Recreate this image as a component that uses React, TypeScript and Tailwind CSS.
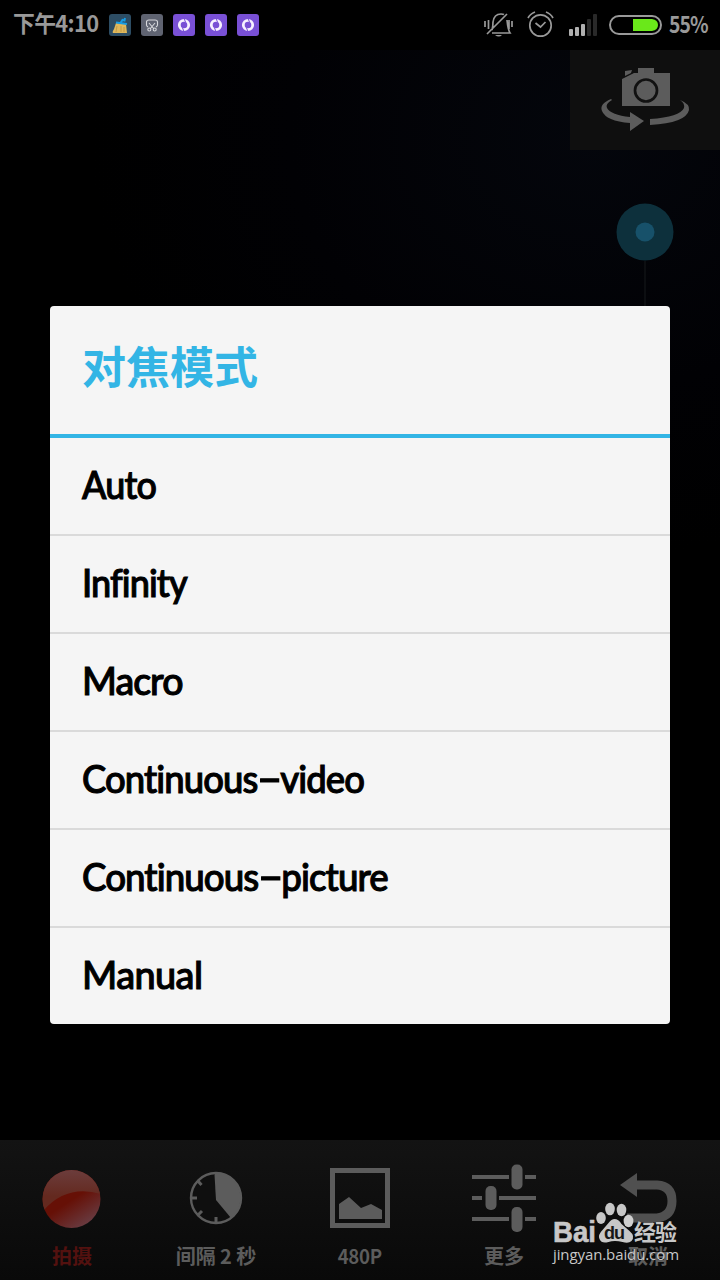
import React from "react";

const modes = [
  { label: "Auto", cls: "scale-x-[0.92] tracking-[-0.9px]" },
  { label: "Infinity", cls: "scale-x-[0.925] tracking-[-1px]" },
  { label: "Macro", cls: "scale-x-[0.96] tracking-[-1px]" },
  { label: "Continuous-video", cls: "scale-x-[0.935] tracking-[-1px]" },
  { label: "Continuous-picture", cls: "scale-x-[0.94] tracking-[-1px]" },
  { label: "Manual", cls: "scale-x-[0.97] tracking-[-0.6px]" },
];

function Broom() {
  return (
    <svg width="22" height="22" viewBox="0 0 22 22">
      <rect width="22" height="22" rx="3" fill="#2d4d64" />
      <path d="m11.500 9 2-3 2 .5L16 4" stroke="#169ce4" strokeWidth="2" fill="none" />
      <path d="M7 9 17 10 18 19H4Q3 18 5 15Z" fill="#dfb85c" />
      <path d="M8 12 7 18M12 12v6M15 13v5" stroke="#b68e3d" strokeWidth=".7" />
      <path d="m7 8.500 11 1.500" stroke="#169ce4" strokeWidth="2" />
    </svg>
  );
}

function Snip() {
  return (
    <svg width="22" height="22" viewBox="0 0 22 22" fill="none" stroke="#d7d8dc" strokeWidth="1.1">
      <rect width="22" height="22" rx="3" fill="#5f6371" stroke="none" />
      <path d="M7 13Q5.500 12 5.500 11V8Q5.500 6 8 6h6q2.500 0 2.500 2v3q0 1-1.500 2M8 9l5 6M14 9 9 15" />
      <circle cx="8.3" cy="15.5" r="1.500" />
      <circle cx="13.7" cy="15.5" r="1.500" />
    </svg>
  );
}

function Ring() {
  return (
    <svg width="22" height="22" viewBox="0 0 22 22" fill="none">
      <rect width="22" height="22" rx="3" fill="#7950d5" />
      <circle cx="11" cy="11" r="4.7" stroke="#f7f1ff" strokeWidth="2.8" />
      <path d="m11 4.5 1.5 3.5M11 17.5 9.5 14" stroke="#7950d5" strokeWidth="1" />
    </svg>
  );
}

function StatusBar() {
  return (
    <header className="flex h-[50px] items-start bg-black text-[#999]">
      <div className="ml-[13px] mt-[5px] w-[96px] whitespace-nowrap text-[23px] font-bold leading-[34px] tracking-[-0.7px]">
        <span className="inline-block origin-left scale-x-[0.95]">下午4:10</span>
      </div>
      <div className="mt-[14px] flex gap-[10px]">
        <Broom />
        <Snip />
        <Ring />
        <Ring />
        <Ring />
      </div>
      <svg className="ml-auto mt-[10px]" width="182" height="30" viewBox="480 10 182 30" fill="none" stroke="#999" strokeWidth="1.7">
        <path d="M492 30q1-3 1-8 1-8 8-8 2 0 3 .5M507 20q1 10 3 13h-18M485 21v6M488.500 20v9M512 21v6M509 20v9M487 34l20-20" />
        <path d="M495 35h7q-3 3-7 0" fill="#999" stroke="none" />
        <circle cx="540.500" cy="25.500" r="10.700" />
        <path d="m535.500 23 5 4 5-5M528 18q2-4 7-6M546 12q5 2 7 6" />
        <g stroke="none">
          <rect x="569" y="29" width="4" height="7" rx="1" fill="#b0b0b0" />
          <rect x="575" y="27" width="4" height="9" rx="1" fill="#b0b0b0" />
          <rect x="581" y="24" width="4" height="12" rx="1" fill="#b0b0b0" />
          <rect x="587" y="19" width="4" height="17" rx="1" fill="#292929" />
          <rect x="593" y="14" width="4" height="22" rx="1" fill="#292929" />
        </g>
        <rect x="610" y="16" width="51" height="18" rx="9" strokeWidth="2" />
        <path d="M633 19h19q6 1 6 6t-6 6h-19Z" fill="#6ae81a" stroke="none" />
      </svg>
      <div className="ml-[7px] mr-[10px] mt-[6px] w-[41px] whitespace-nowrap text-[23px] font-bold leading-[34px] tracking-[-1px]">
        <span className="inline-block origin-left scale-x-[0.84]">55%</span>
      </div>
    </header>
  );
}

function CameraView() {
  return (
    <main className="flex h-[1090px] flex-col items-end bg-[radial-gradient(ellipse_500px_420px_at_82%_8%,#04060c,#010104_60%,#000)]">
      <div className="flex h-[100px] w-[150px] justify-center bg-[#0f0f0f]">
        <svg width="150" height="100" viewBox="570 50 150 100" fill="#5c5c5c">
          <path d="M622 79 634 73h4v-5h16v5h16v33h-48ZM625 71l7-1-1 3-6 3Z" />
          <circle cx="646" cy="90.500" r="11" stroke="#111" strokeWidth="2.700" />
          <path d="M611 99q-12 5-9 12 4 10 28 12v8l14-10-14-9v5q-19-2-23-9-2-4 5-8Z" />
          <path d="M680 100q5 3 4 8-4 9-34 11v6q36-2 39-15 1-6-9-10Z" />
        </svg>
      </div>
      <svg className="mr-[45px] mt-[53px]" width="60" height="150" viewBox="0 0 60 150">
        <path d="M30 58v92" stroke="#0c0e11" strokeWidth="2" />
        <circle cx="30" cy="29" r="28.500" fill="#0d303c" />
        <circle cx="30" cy="29" r="9.500" fill="#17516a" />
      </svg>
    </main>
  );
}

function ToolItem({ label, red, narrow, children }: { label: string; red?: boolean; narrow?: boolean; children: React.ReactNode }) {
  return (
    <div className="flex w-[144px] flex-col items-center">
      <svg width="144" height="98" viewBox="0 0 144 98">{children}</svg>
      <span
        className={
          "whitespace-pre text-[20px] font-bold leading-[36px] " +
          (narrow ? "scale-x-[0.93] tracking-[-0.3px] " : "tracking-[-0.1px] ") +
          (red ? "text-[#53110f]" : "text-[#5c5c5c]")
        }
      >
        {label}
      </span>
    </div>
  );
}

function Toolbar() {
  return (
    <footer className="flex h-[140px] bg-linear-to-b from-[#131313] to-[#090909]">
      <ToolItem label="拍摄" red>
        <defs>
          <linearGradient id="ball" x1="0.2" y1="0" x2="0.85" y2="1">
            <stop offset=".5" stopColor="#661006" />
            <stop offset="1" stopColor="#68434c" />
          </linearGradient>
          <linearGradient id="shine" x1="0" y1="0" x2="0" y2="1">
            <stop stopColor="#6c3e3e" />
            <stop offset=".6" stopColor="#64291f" />
          </linearGradient>
          <clipPath id="disc">
            <circle cx="71.500" cy="59" r="29" />
          </clipPath>
        </defs>
        <circle cx="71.500" cy="59" r="29" fill="url(#ball)" />
        <path d="M40 28h64v27Q68 43 44 70l-4 5Z" fill="url(#shine)" clipPath="url(#disc)" />
      </ToolItem>
      <ToolItem label="间隔 2 秒">
        <circle cx="72" cy="58" r="25" fill="#0f0f0f" stroke="#5c5c5c" strokeWidth="2.400" />
        <path d="M72 60 70.500 35 72 32a26 26 0 0 1 15 46Z" fill="#5c5c5c" />
        <path d="M47 58h6M72 83v-6M54 75l4-4M54 41l3.500 4" stroke="#5c5c5c" strokeWidth="3" />
      </ToolItem>
      <ToolItem label="480P" narrow>
        <rect x="44.500" y="30.500" width="55" height="55" fill="none" stroke="#5c5c5c" strokeWidth="5" />
        <path d="M51 79V64l10-7 12 11 10-4 11 6v9Z" fill="#5c5c5c" />
      </ToolItem>
      <ToolItem label="更多">
        <path d="M40 37h37M93 37h11M40 58h10M67 58h37M40 79h37M93 79h11" stroke="#5c5c5c" strokeWidth="4" />
        <rect x="79.500" y="24.500" width="11" height="25" rx="5" fill="#5c5c5c" />
        <rect x="53.500" y="46" width="11" height="24" rx="5" fill="#5c5c5c" />
        <rect x="79.500" y="67" width="11" height="25" rx="5" fill="#5c5c5c" />
      </ToolItem>
      <ToolItem label="取消">
        <path d="M57 45h24q15 1 15 16T81 78H51" fill="none" stroke="#505050" strokeWidth="9" />
        <path d="M44 45 61 33v24Z" fill="#505050" />
      </ToolItem>
    </footer>
  );
}

function Watermark() {
  return (
    <div className="absolute left-[552px] top-[1200px] h-[66px] w-[132px] text-[#c7c7c7]">
      <svg className="overflow-visible" width="132" height="46" viewBox="552 1200 132 46" fill="#c7c7c7">
        <text x="553" y="1242" fontFamily="Liberation Sans" fontSize="29" fontWeight="700" textLength="43" lengthAdjust="spacingAndGlyphs" stroke="#c7c7c7" strokeWidth=".6">Bai</text>
        <ellipse cx="601" cy="1218" rx="4.800" ry="6" />
        <ellipse cx="610" cy="1209" rx="4.800" ry="6.300" />
        <ellipse cx="621.500" cy="1210" rx="4.800" ry="6.200" />
        <ellipse cx="628.500" cy="1221" rx="4.900" ry="6.200" fill="#d0d0d0" />
        <path d="M614.500 1219q4 0 7 5l8 7q6 5 2 10-3 3-9 1-8-2-14 0-7 2-9-3-2-4 3-9l6-7q3-4 6-4Z" />
        <text x="604" y="1239" fontFamily="Liberation Sans" fontSize="18" fontWeight="700" textLength="21" fill="#171717">du</text>
        <text x="634" y="1240" fontFamily="Noto Sans CJK SC" fontSize="22" fontWeight="700" textLength="43">经验</text>
      </svg>
      <div className="absolute left-[1px] top-[44px] whitespace-nowrap font-['Open_Sans',sans-serif] text-[15px] font-medium leading-[20px] tracking-[-0.1px]">jingyan.baidu.com</div>
    </div>
  );
}

function FocusDialog() {
  return (
    <div className="absolute left-[50px] top-[306px] flex h-[718px] w-[620px] flex-col overflow-hidden rounded-[4px] bg-[#f5f5f5]">
      <h1 className="h-[132px] shrink-0 border-b-4 border-[#33b5e5] pl-[32px] text-[44px] font-bold leading-[118px] text-[#33b5e5]">对焦模式</h1>
      <ul className="font-['Lato','Noto_Sans_CJK_SC',sans-serif] text-[39px] font-medium text-black">
        {modes.map(({ label, cls }) => (
          <li key={label} className="flex h-[98px] items-center border-b-2 border-[#dadada] pb-[5px] pl-[32px] last:h-[96px] last:border-b-0">
            <span className={"inline-block origin-left whitespace-nowrap leading-[56px] [-webkit-text-stroke:1.1px_black] " + cls}>
              {label.split("-").map((part, i) => (
                <React.Fragment key={part}>
                  {i > 0 && <span className="ml-[5px] mr-[6px] inline-block -translate-y-px scale-x-[1.9]">-</span>}
                  {part}
                </React.Fragment>
              ))}
            </span>
          </li>
        ))}
      </ul>
    </div>
  );
}

export default function App() {
  return (
    <div className="relative h-[1280px] w-[720px] overflow-hidden bg-black font-['Noto_Sans_CJK_SC',sans-serif]">
      <StatusBar />
      <CameraView />
      <Toolbar />
      <FocusDialog />
      <Watermark />
    </div>
  );
}
